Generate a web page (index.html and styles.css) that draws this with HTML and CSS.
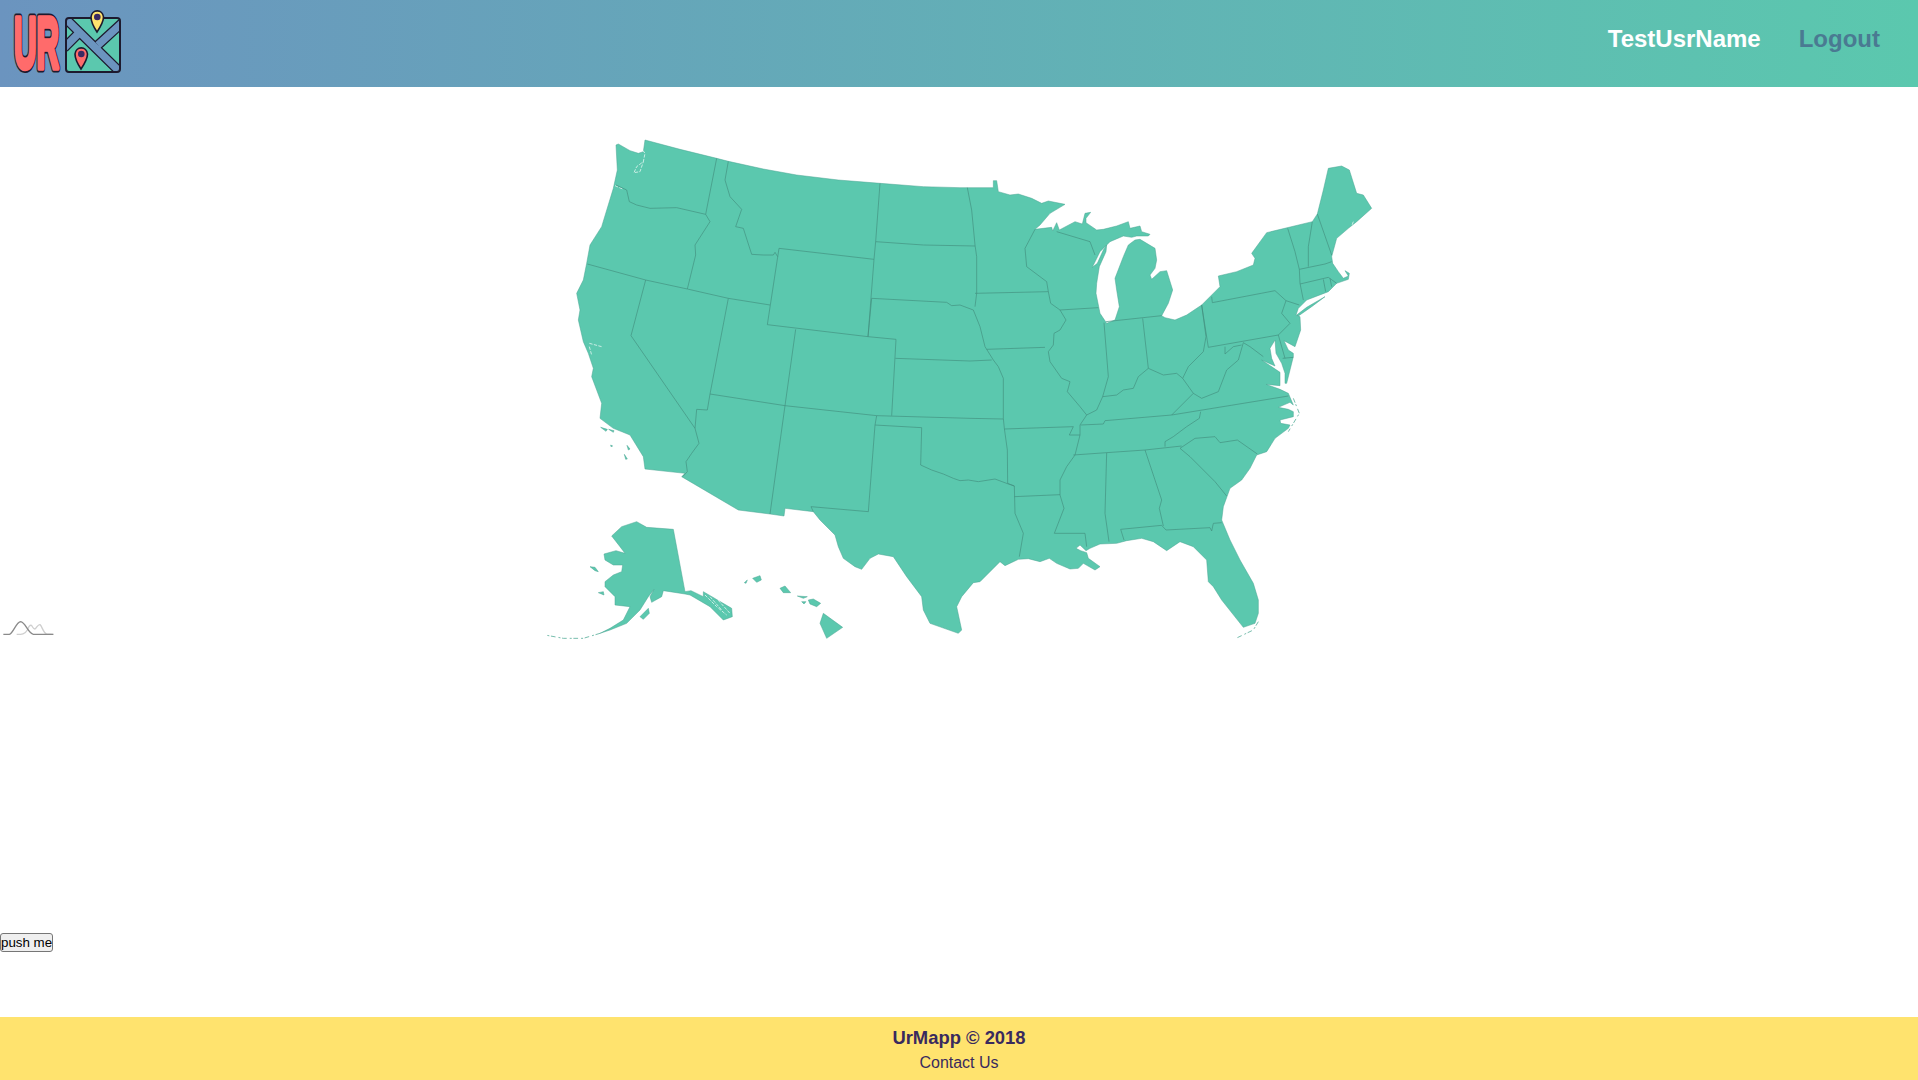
FILE: index.html
```html
<!DOCTYPE html>
<html lang="en">
<head>
<meta charset="utf-8">
<title>UrMapp</title>
<link rel="stylesheet" href="styles.css">
</head>
<body>
<header class="topbar">
  <a class="brand" href="#" aria-label="UrMapp">
    <svg class="logo" viewBox="12 8 112 66" width="112" height="66">
      <defs>
        <clipPath id="sheet"><rect x="66" y="18" width="54" height="54" rx="3"/></clipPath>
        <text id="ur" x="14" y="67.500" font-size="72" textLength="45" lengthAdjust="spacingAndGlyphs">UR</text>
      </defs>
      <use href="#ur" class="ur-edge"/>
      <use href="#ur" class="ur-face"/>
      <rect class="sheet" x="66" y="18" width="54" height="54" rx="3"/>
      <g clip-path="url(#sheet)">
        <path class="road-edge" d="M66 19 L120 72 M64 48 L81 31 M98 45 L122 23"/>
        <path class="road" d="M66 19 L120 72 M64 48 L81 31 M98 45 L122 23"/>
      </g>
      <rect class="sheet-line" x="66" y="18" width="54" height="54" rx="3"/>
      <path class="pin-yellow" d="M97 32 C93 26 91 22 91 17 A6.3 7 0 0 1 103.500 17 C103.500 22 101 26 97 32 Z"/>
      <circle class="pin-dot" cx="97.300" cy="17" r="3.300"/>
      <path class="pin-coral" d="M81 69 C77 63 75 59 75 54 A6.300 7 0 0 1 87.500 54 C87.500 59 85 63 81 69 Z"/>
      <circle class="pin-dot" cx="81.300" cy="54" r="3.300"/>
    </svg>
  </a>
  <nav class="nav">
    <a class="nav-user" href="#">TestUsrName</a>
    <a class="nav-logout" href="#">Logout</a>
  </nav>
</header>

<main class="page">
  <section class="map-row">
    <svg class="spark" viewBox="0 60 162 54" width="54" height="18">
      <path class="spark-b" d="M50 103 C65 103 75 103 82 90 C86 80 90 74 94 76 C98 80 100 88 105 87 C110 84 114 72 120 74 C126 78 130 100 140 102 L160 103"/>
      <path class="spark-a" d="M10 103 L28 103 C40 100 48 66 62 65 C76 66 84 100 100 103 L160 103"/>
    </svg>
    <svg class="usmap" viewBox="0 0 2574 1590" width="858" height="530">
      <path class="land" d="M345 60 L450 88 560 115 595 124 700 147 800 165 925 180 1050 190 1180 200 1290 203 1390 203 1390 182 1400 182 1405 215 1440 225 1465 222 1505 235 1535 250 1555 243 1605 253 1560 280 1530 315 1515 328 1565 322 1568 333 1580 308 1588 330 1635 305 1657 312 1665 280 1682 277 1668 295 1668 308 1700 330 1720 328 1760 318 1795 305 1800 325 1830 318 1835 335 1860 343 1855 348 1820 348 1805 352 1780 348 1740 365 1710 395 1687 442 1702 430 1720 390 1730 375 1728 395 1708 440 1700 490 1698 520 1710 580 1730 610 1755 600 1768 560 1760 510 1755 475 1780 410 1795 375 1815 360 1830 358 1875 385 1880 420 1875 445 1860 465 1865 478 1890 455 1910 452 1928 510 1915 550 1895 587 1905 593 1935 600 1970 585 2015 555 2070 500 2065 468 2120 455 2170 435 2175 415 2165 400 2210 338 2347 305 2362 282 2380 210 2395 145 2435 138 2458 150 2480 220 2500 225 2525 265 2480 305 2455 325 2420 355 2405 410 2408 430 2425 455 2440 475 2455 468 2445 452 2458 460 2455 478 2420 490 2395 515 2330 540 2305 565 2298 585 2310 590 2312 630 2295 680 2262 662 2275 690 2290 700 2290 710 2270 790 2265 790 2265 760 2255 730 2238 700 2235 660 2220 685 2225 715 2235 738 2195 720 2250 757 2250 797 2208 793 2250 808 2275 820 2290 855 2280 847 2245 862 2275 868 2290 875 2290 890 2250 900 2252 910 2280 915 2275 925 2235 955 2210 995 2180 1005 2160 1045 2135 1080 2100 1105 2080 1160 2075 1200 2100 1260 2130 1320 2170 1390 2185 1440 2185 1480 2175 1510 2140 1522 2075 1440 2050 1400 2035 1385 2030 1320 1990 1280 1950 1265 1910 1292 1870 1265 1835 1255 1790 1262 1760 1270 1710 1272 1680 1285 1668 1292 1650 1275 1638 1285 1652 1292 1670 1298 1675 1315 1710 1340 1695 1350 1660 1330 1645 1345 1620 1347 1580 1330 1558 1315 1530 1325 1495 1316 1465 1318 1425 1337 1410 1325 1350 1385 1330 1388 1295 1430 1280 1460 1295 1530 1285 1540 1200 1510 1180 1470 1175 1430 1130 1370 1090 1310 1045 1302 1020 1315 995 1348 975 1340 940 1315 925 1280 915 1245 870 1200 850 1175 765 1165 762 1188 720 1182 625 1170 455 1070 465 1060 345 1047 340 1010 300 945 250 925 210 895 215 850 185 770 190 745 175 700 160 665 145 600 150 570 140 520 160 480 170 430 180 375 215 320 250 205 262 150 258 75 265 72 300 92 325 100 340 95 Z
        M2300 585 L2330 562 2385 530 2345 560 2305 588 Z
        M212 922 L232 928 228 934 Z M236 928 L252 932 250 937 Z M242 975 L248 978 243 980 Z M291 976 L300 987 295 990 Z M283 1003 L292 1017 287 1018 Z
        M245 1248 L275 1220 320 1205 350 1222 430 1228 465 1415 483 1412 520 1430 520 1415 605 1465 607 1490 580 1500 540 1460 480 1425 465 1422 420 1415 400 1412 395 1430 365 1447 360 1430 372 1408 355 1430 330 1470 290 1510 240 1530 210 1540 240 1525 280 1500 300 1460 255 1455 255 1430 225 1400 225 1385 250 1365 275 1355 278 1335 250 1335 225 1320 222 1302 258 1292 285 1300 270 1280 Z
        M330 1490 L355 1465 358 1480 340 1498 Z M205 1418 L220 1415 222 1425 Z M180 1340 L195 1342 205 1355 195 1352 Z
        M668 1375 L690 1367 694 1380 680 1387 Z M643 1388 L652 1380 648 1390 Z M750 1405 L765 1398 782 1418 760 1418 Z M802 1428 L832 1430 820 1435 Z M815 1445 L828 1445 822 1452 Z M835 1440 L850 1437 872 1450 860 1460 840 1452 Z M880 1480 L938 1522 890 1555 870 1510 Z"/>
      <path class="thin" d="M210 1540 L160 1555 100 1555 45 1545 M2290 835 L2308 880 2275 935 M2185 1505 L2170 1530 2122 1553"/>
      <path class="water" d="M330 80 L345 100 340 125 320 140 312 158 330 155 340 125 M178 670 L215 680 M178 680 L185 705 M255 197 L278 207 M525 1425 L560 1460 590 1485 M540 1430 L575 1470 M555 1430 L600 1480 M2470 305 L2465 318"/>
      <path class="borders" d="M258 195 L290 210 298 245 320 255 360 265 440 263 527 283 M560 115 L527 283 540 305 495 375 497 405 472 507 M595 124 L585 180 600 230 635 268 617 320 640 325 665 403 700 405 730 405 735 397 743 410
        M172 432 L347 480 472 507 595 535 720 555 M347 480 L303 647 495 925 507 970 485 1000 468 1025 472 1055 458 1070 M595 535 L540 822 532 870 500 868 495 925
        M540 822 L765 857 1040 887 1320 895 1420 897 M747 385 L1032 418 1014 650 712 614 Z M797 628 L765 857 720 1182 M1014 650 L1098 658 1085 887 M1040 887 L1035 915 1175 923 1172 1035 1205 1050 1240 1062 1270 1075 1290 1082 1315 1080 1345 1085 1395 1077 1435 1092 1453 1098
        M1035 915 L1015 1175 843 1160 850 1175 M1096 715 L1320 723 1385 720 M1050 190 L1037 365 1032 418 M1014 650 L1025 535 1250 547 1265 557 1290 555 1330 570 1350 620 1365 680 1390 720 1405 740 1420 775 1420 895 1423 925 1432 990 1433 1090 1453 1098 1455 1180 1480 1240 1468 1310
        M1037 365 L1180 375 1335 378 M1312 203 L1325 270 1335 375 1340 410 1340 520 1335 560 M1423 927 L1630 920 1618 945 1650 945 1635 1005 1610 1040 1590 1080 1590 1125 1602 1165 1573 1240 1665 1240 1670 1280 M1453 1130 L1590 1124
        M1335 520 L1555 515 M1370 688 L1545 682 M1515 328 L1485 385 1490 440 1550 485 1555 515 1562 550 1590 570 1608 600 1590 630 1572 640 1570 675 1555 695 1560 725 1595 775 1620 785 1612 815 1650 860 1670 885 1650 915 1650 945 M1590 570 L1705 563 M1580 335 L1680 365 1695 405
        M1722 608 L1735 770 1718 830 1700 870 1670 885 M1728 605 L1895 587 M1838 595 L1855 745 M1718 830 L1760 825 1780 810 1810 805 1825 770 1855 745 1900 765 1940 760 1958 775 1975 740 2020 695 2028 650 2015 555 2035 682 2245 645 M2045 530 L2047 548 2235 512 2268 542 2255 580 2280 610 2245 645 2265 715 M2268 542 L2308 555 M1958 775 L1990 820 2015 835 2065 815 2090 750 2125 720 2140 668 2160 680 2200 710 M2085 680 L2085 702 2110 680 2135 675 M2258 715 L2290 712 M1990 820 L1925 885
        M1652 915 L1720 912 1725 902 1925 885 2275 828 M2012 875 L2008 895 1970 920 1930 950 1905 965 1905 980 M1630 1005 L1730 998 1845 990 1955 978 M1950 985 L1995 955 2055 950 2070 968 2122 960 2182 1002 M1950 985 L1980 1010 2055 1085 2090 1128 M1730 998 L1725 1180 1737 1265 M1845 990 L1895 1140 1888 1165 1900 1218 M1782 1260 L1772 1228 1895 1216 1908 1230 2040 1223 2045 1233 2050 1210 2075 1208
        M2273 325 L2295 395 2308 448 2310 490 2320 540 M2347 305 L2335 380 2335 440 M2362 282 L2405 405 M2308 448 L2385 432 2405 425 M2310 492 L2395 472 2420 490 M2380 478 L2387 515 M2400 475 L2405 500"/>
    </svg>
  </section>
  <button class="push" type="button">push me</button>
</main>

<footer class="footer">
  <div class="footer-title">UrMapp © 2018</div>
  <a class="footer-link" href="#">Contact Us</a>
</footer>
</body>
</html>
```

FILE: styles.css
```css
* { box-sizing: border-box; }

html, body { height: 100%; }

body {
  margin: 0;
  display: flex;
  flex-direction: column;
  min-height: 1080px;
  background: #fff;
  font-family: "Liberation Sans", Arial, sans-serif;
  overflow: hidden;
}

.topbar {
  flex: 0 0 87px;
  display: flex;
  align-items: center;
  justify-content: space-between;
  padding: 0 38px 10px 12px;
  background: linear-gradient(to right, #6b94bf, #5bc8ae);
}

.brand { display: block; line-height: 0; margin-top: 5px; }
.logo { display: block; }

.ur-edge { fill: #1d1a2e; stroke: #1d1a2e; stroke-width: 9; stroke-linejoin: round; font-family: "Liberation Sans", sans-serif; font-weight: 700; }
.ur-face { fill: #ff6b6b; stroke: #ff6b6b; stroke-width: 5.500; stroke-linejoin: round; font-family: "Liberation Sans", sans-serif; font-weight: 700; }
.sheet { fill: #5bc8ae; }
.sheet-line { fill: none; stroke: #1d1a2e; stroke-width: 2; }
.road-edge { fill: none; stroke: #1d1a2e; stroke-width: 10; }
.road { fill: none; stroke: #6b94bf; stroke-width: 7.500; }
.pin-yellow { fill: #ffe36e; stroke: #1d1a2e; stroke-width: 1.600; }
.pin-coral { fill: #ff6b6b; stroke: #1d1a2e; stroke-width: 1.600; }
.pin-dot { fill: #3b2a63; }

.nav { display: flex; gap: 38px; align-items: center; }
.nav-user, .nav-logout { font-size: 24px; font-weight: 700; text-decoration: none; line-height: 28px; }
.nav-user { color: #fff; }
.nav-logout { color: #4a7a92; }

.page { flex: 1; display: flex; flex-direction: column; align-items: flex-start; }

.map-row {
  width: 100%;
  display: grid;
  grid-template-columns: 1fr auto 1fr;
  padding-top: 33px;
}

.spark { grid-column: 1; align-self: end; margin-bottom: 12px; display: block; }
.spark-a, .spark-b { fill: none; stroke-width: 4; }
.spark-a { stroke: #8a8a8a; }
.spark-b { stroke: #cfcfcf; }

.usmap { grid-column: 2; display: block; }
.land { fill: #5bc8ae; stroke: #4ba592; stroke-width: 1.500; stroke-linejoin: round; }
.thin { fill: none; stroke: #5bb09c; stroke-width: 2.500; stroke-dasharray: 14 5 6 9; }
.water { fill: none; stroke: #fff; stroke-width: 2; stroke-dasharray: 10 4; }
.borders { fill: none; stroke: #43907f; stroke-width: 2; stroke-linejoin: round; }

.push {
  margin: auto 0 65px;
  padding: 0;
  height: 19px;
  width: 53px;
  border: 1px solid #767676;
  border-radius: 3px;
  background: #efefef;
  color: #000;
  font: 13.333px "Liberation Sans", Arial, sans-serif;
  white-space: nowrap;
}

.footer {
  flex: 0 0 63px;
  padding-top: 8px;
  background: #ffe36e;
  color: #392a5e;
  text-align: center;
  line-height: 25px;
}

.footer-title { font-size: 18.400px; font-weight: 700; }
.footer-link { display: block; color: #392a5e; font-size: 16px; text-decoration: none; }
```
